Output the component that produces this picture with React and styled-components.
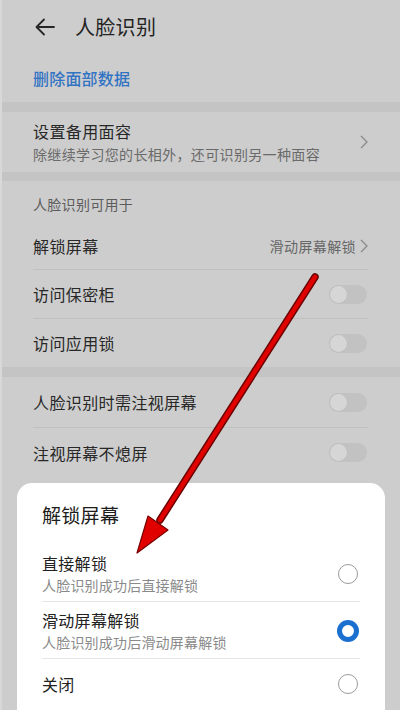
import React from "react";
import styled, { createGlobalStyle } from "styled-components";

const Global = createGlobalStyle`
  html, body { margin: 0; padding: 0; background: #cccccc; }
  body { font-family: "Noto Sans CJK SC", "Noto Sans", sans-serif; }
  * { box-sizing: border-box; }
`;

const Screen = styled.div`
  position: relative;
  width: 400px;
  height: 710px;
  overflow: hidden;
  background: #cdcdcd;
  display: flex;
  flex-direction: column;
  border-left: 2px solid #d8d8d8;
`;

const Header = styled.div`
  height: 54px;
  display: flex;
  align-items: center;
  padding-left: 33px;
  gap: 20px;
`;

const Title = styled.div`
  font-size: 20px;
  color: #242424;
  line-height: 1;
  letter-spacing: 0.3px;
`;

const LinkRow = styled.div`
  height: 48px;
  display: flex;
  align-items: center;
  padding-left: 31px;
  font-size: 16px;
  font-weight: 500;
  color: #3274c4;
  letter-spacing: 0.2px;
`;

const Band = styled.div`
  height: ${(p) => p.$h || 10}px;
  background: #c4c4c4;
`;

const List = styled.div`
  padding: 0 32px 0 31px;
  display: flex;
  flex-direction: column;
`;

const Row = styled.div`
  min-height: ${(p) => p.$h || 49}px;
  display: flex;
  align-items: center;
  justify-content: space-between;
  border-bottom: ${(p) => (p.$divider ? "1px solid #c0c0c0" : "none")};
`;

const RowText = styled.div`
  display: flex;
  flex-direction: column;
`;

const RowTitle = styled.div`
  font-size: 16px;
  line-height: 22px;
  color: #282828;
  letter-spacing: 0.4px;
`;

const RowSub = styled.div`
  font-size: 14px;
  line-height: 20px;
  color: #6a6a6a;
  margin-top: 2px;
  letter-spacing: 0.35px;
`;

const SectionHeader = styled.div`
  height: 41px;
  display: flex;
  align-items: flex-end;
  padding-left: 31px;
  font-size: 14px;
  color: #5c5c5c;
  line-height: 20px;
  padding-bottom: 8px;
  letter-spacing: 0.3px;
`;

const RightValue = styled.div`
  display: flex;
  align-items: center;
  gap: 4px;
  font-size: 14px;
  color: #666;
  letter-spacing: 0.4px;
`;

const Toggle = styled.div`
  width: 38px;
  height: 19px;
  border-radius: 10px;
  background: #c2c2c2;
  position: relative;
  margin-right: 1px;
  &::after {
    content: "";
    position: absolute;
    left: 0;
    top: 0;
    width: 19px;
    height: 19px;
    border-radius: 50%;
    background: #d6d6d6;
    box-shadow: 0 0 0 1px #bcbcbc inset;
  }
`;

const Sheet = styled.div`
  position: absolute;
  left: 15px;
  right: 15px;
  top: 483px;
  bottom: 0;
  background: #ffffff;
  border-radius: 15px 15px 0 0;
  padding: 0 25px 0 25px;
  display: flex;
  flex-direction: column;
`;

const SheetTitle = styled.div`
  font-size: 19px;
  line-height: 28px;
  color: #1c1c1c;
  margin-top: 18px;
  margin-bottom: 16px;
  letter-spacing: 0.3px;
`;

const Option = styled.div`
  min-height: ${(p) => p.$h || 57}px;
  display: flex;
  align-items: center;
  justify-content: space-between;
  padding: ${(p) => (p.$pad ? "7px 0 6px" : "0")};
  border-bottom: ${(p) => (p.$divider ? "1px solid #e6e6e6" : "none")};
`;

const OptTitle = styled.div`
  font-size: 16px;
  line-height: 22px;
  color: #222;
  letter-spacing: 0.3px;
`;

const OptSub = styled.div`
  font-size: 14px;
  line-height: 20px;
  color: #8a8a8a;
  margin-top: 1px;
  letter-spacing: 0.2px;
`;

const Radio = styled.div`
  width: ${(p) => (p.$on ? 22 : 20)}px;
  height: ${(p) => (p.$on ? 22 : 20)}px;
  border-radius: 50%;
  border: ${(p) => (p.$on ? "5px solid #1a6fcf" : "1px solid #9a9a9a")};
  margin-right: ${(p) => (p.$on ? 1 : 2)}px;
  background: #fff;
`;

const ArrowLayer = styled.svg`
  position: absolute;
  left: 0;
  top: 0;
  width: 400px;
  height: 710px;
  pointer-events: none;
`;

const Chevron = ({ color = "#8a8a8a" }) => (
  <svg width="8" height="14" viewBox="0 0 8 14">
    <path d="M1 1 L7 7 L1 13" fill="none" stroke={color} strokeWidth="1.3" />
  </svg>
);

const BackArrow = () => (
  <svg width="20" height="18" viewBox="0 0 20 18">
    <path d="M19 9 H2 M9 1.5 L1.5 9 L9 16.5" fill="none" stroke="#262626" strokeWidth="1.8" strokeLinecap="round" strokeLinejoin="round" />
  </svg>
);

export default function App() {
  return (
    <>
      <Global />
      <Screen>
        <Header>
          <BackArrow />
          <Title>人脸识别</Title>
        </Header>
        <LinkRow>删除面部数据</LinkRow>
        <Band $h={10} />
        <List>
          <Row $h={60}>
            <RowText>
              <RowTitle>设置备用面容</RowTitle>
              <RowSub>除继续学习您的长相外，还可识别另一种面容</RowSub>
            </RowText>
            <Chevron />
          </Row>
        </List>
        <Band $h={9} />
        <SectionHeader>人脸识别可用于</SectionHeader>
        <List>
          <Row $divider $h={48}>
            <RowTitle>解锁屏幕</RowTitle>
            <RightValue>
              滑动屏幕解锁
              <Chevron />
            </RightValue>
          </Row>
          <Row $divider>
            <RowTitle>访问保密柜</RowTitle>
            <Toggle />
          </Row>
          <Row $h={48}>
            <RowTitle>访问应用锁</RowTitle>
            <Toggle />
          </Row>
        </List>
        <Band $h={10} />
        <List>
          <Row $divider $h={51}>
            <RowTitle>人脸识别时需注视屏幕</RowTitle>
            <Toggle />
          </Row>
          <Row>
            <RowTitle>注视屏幕不熄屏</RowTitle>
            <Toggle />
          </Row>
        </List>
        <Sheet>
          <SheetTitle>解锁屏幕</SheetTitle>
          <Option $divider $pad>
            <RowText>
              <OptTitle>直接解锁</OptTitle>
              <OptSub>人脸识别成功后直接解锁</OptSub>
            </RowText>
            <Radio />
          </Option>
          <Option $divider $pad>
            <RowText>
              <OptTitle>滑动屏幕解锁</OptTitle>
              <OptSub>人脸识别成功后滑动屏幕解锁</OptSub>
            </RowText>
            <Radio $on />
          </Option>
          <Option $h={50}>
            <OptTitle>关闭</OptTitle>
            <Radio />
          </Option>
        </Sheet>
        <ArrowLayer viewBox="0 0 400 710">
          <line x1="313" y1="277" x2="158" y2="520" stroke="#6a0000" strokeWidth="7.5" strokeLinecap="round" />
          <line x1="313" y1="277" x2="158" y2="520" stroke="#e10000" strokeWidth="4.5" strokeLinecap="round" />
          <polygon points="135,553 146,516 166,530" fill="#e10000" stroke="#7a0000" strokeWidth="1.2" strokeLinejoin="round" />
        </ArrowLayer>
      </Screen>
    </>
  );
}
